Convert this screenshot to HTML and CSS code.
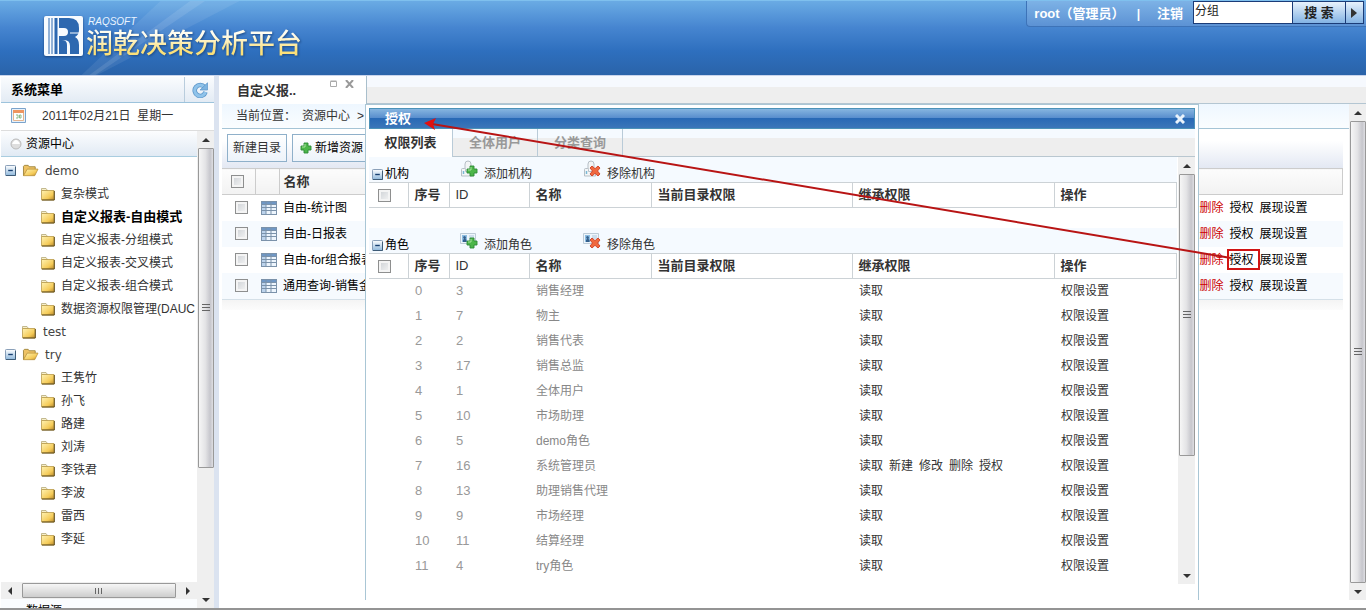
FILE: index.html
```html
<!DOCTYPE html>
<html lang="zh-CN">
<head>
<meta charset="utf-8">
<title>润乾决策分析平台</title>
<link rel="stylesheet" href="styles.css">
</head>
<body>
<svg class="sprite" aria-hidden="true">
  <defs>
    <linearGradient id="gold" x1="0" y1="0" x2="1" y2="1"><stop offset="0" stop-color="#fff3b4"/><stop offset=".65" stop-color="#f5cb58"/><stop offset="1" stop-color="#b8862a"/></linearGradient>
    <linearGradient id="steel" x1="0" y1="0" x2="0" y2="1"><stop offset="0" stop-color="#fff"/><stop offset="1" stop-color="#8fb8dc"/></linearGradient>
    <symbol id="folder" viewBox="0 0 16 16"><path d="M1.500 4.500V2.500h4.500l1.500 2z" fill="#f7efc9" stroke="#b5a878" stroke-width=".8"/><path d="M1.500 4.500h12.500v9.500h-12.500z" fill="url(#gold)" stroke="#b99a4a" stroke-width=".8"/><path d="M14.300 5v9H2" fill="none" stroke="#5f4b18" stroke-width="1"/></symbol>
    <symbol id="folder-open" viewBox="0 0 18 16"><path d="M1.500 13.500V3.500l1-1h4l1 1.500h6.500v3" fill="#eec264" stroke="#a08840"/><path d="M1.500 13.500l4-7H17l-3.500 7z" fill="url(#gold)" stroke="#b58d35" stroke-width=".8"/></symbol>
    <symbol id="minus" viewBox="0 0 12 12"><rect x=".5" y=".5" width="11" height="11" rx="1" fill="url(#steel)" stroke="#7892ae"/><path d="M11.500 2v9.500H1" fill="none" stroke="#35536f"/><path d="M3.500 6h5" stroke="#173f70" stroke-width="1.500"/></symbol>
    <symbol id="grid" viewBox="0 0 16 14"><path d="M0 0h16v14H0z" fill="#7b92aa"/><path d="M1 1h3.500v2H1zM5.500 1h4v2h-4zM10.500 1H15v2h-4.500z" fill="#6f97c5"/><path d="M1 4h3.500v2H1zM1 7h3.500v2H1zM1 10h3.500v3H1z" fill="#bcd3ec"/><path d="M5.500 4h4v2h-4zM10.500 4H15v2h-4.500zM5.500 7h4v2h-4zM10.500 7H15v2h-4.500zM5.500 10h4v3h-4zM10.500 10H15v3h-4.500z" fill="#edf5fd"/></symbol>
    <symbol id="plus" viewBox="0 0 12 12"><path d="M4 1h4v3h3v4H8v3H4V8H1V4h3z" fill="#4cb649" stroke="#2d8a36" stroke-width=".9" stroke-linejoin="round"/><path d="M5 2v3H2" stroke="#a5e39a" fill="none"/></symbol>
    <symbol id="cross" viewBox="0 0 12 12"><path d="M3 1l3 2.700L9 1l2 2-2.500 3L11 9l-2 2-3-2.700L3 11 1 9l2.500-3L1 3z" fill="#f0693f" stroke="#cf3d22" stroke-width=".9" stroke-linejoin="round"/></symbol>
    <symbol id="org" viewBox="0 0 14 18"><path d="M5 9V4q0-3 3-3t3 3v5M1.500 16V9.500q0-1 1-1h2q1 0 1 1v2h7V16z" fill="#f3f5f6" stroke="#b6bfc6"/><path d="M3.500 11v3" stroke="#79b8d6" stroke-width="1.500"/></symbol>
    <symbol id="card" viewBox="0 0 16 12"><path d="M.5 .5h15v10H.5z" fill="#eef5fb" stroke="#bdcbd7"/><path d="M2 2h5v7H2z" fill="#8cbde2"/><path d="M3 9V7l1-1-1-2 1.500-1L6 4 5.500 6l1 1v2z" fill="#345f8b"/><path d="M9 3h5M9 5h5" stroke="#acc7dd"/></symbol>
  </defs>
</svg>

<header class="top">
  <svg class="rays" viewBox="0 0 400 75" aria-hidden="true"><path d="M80 75L160 0H240L96 75z" fill="#fff" opacity=".08"/><path d="M88 75L190 0h15L94 75z" fill="#fff" opacity=".1"/></svg>
  <div class="brand">
    <svg class="logo" viewBox="0 0 39 40" aria-hidden="true"><rect width="39" height="40" rx="2" fill="#f7fbff"/><path d="M5 2v36M8 2v36" stroke="#2d68b0"/><path d="M12 2v36" stroke="#2d68b0" stroke-width="3"/><path d="M15 2h10q10 0 10 10v2q0 5-4 7 4 2 4 8v9h-9v-8q0-6-6-6h-5v-4h5q4 0 4-4t-4-4h-5z" fill="#2d68b0"/><path d="M15 24h3q5 0 5 5v9h-8z" fill="#2d68b0"/><path d="M26 17h10" stroke="#f7fbff"/></svg>
    <div class="brand-text"><span class="brand-en">RAQSOFT</span><h1 class="brand-cn">润乾决策分析平台</h1></div>
  </div>
  <div class="user">
    <span class="who">root（管理员）</span><span class="bar">|</span><a class="logout" href="#">注销</a>
    <form class="search">
      <input class="search-box" type="text" value="分组" aria-label="搜索内容">
      <button class="search-btn" type="button">搜 索</button>
      <button class="search-more" type="button" aria-label="更多"><svg width="7" height="10" viewBox="0 0 7 10"><path d="M0 0l6 5-6 5z" fill="#333"/></svg></button>
    </form>
  </div>
</header>

<div class="workspace">
  <aside class="side">
    <div class="side-head">
      <h2 class="side-title">系统菜单</h2>
      <button class="refresh" type="button" aria-label="刷新"><svg width="16" height="16" viewBox="0 0 16 16"><path d="M12.500 5A5.500 5.500 0 1 0 13.500 10" fill="none" stroke="#5b95c8" stroke-width="4.500"/><path d="M12.500 5A5.500 5.500 0 1 0 13.500 10" fill="none" stroke="#8fc3ea" stroke-width="3"/><path d="M8 8h7.500V.8z" fill="#7db4e0" stroke="#5b95c8" stroke-width=".7"/></svg></button>
    </div>
    <div class="date"><svg width="15" height="15" viewBox="0 0 15 15" aria-hidden="true"><path d="M.5 .5h14v14H.5z" fill="#e7f1fa" stroke="#7ba3cb"/><path d="M2.500 2.500h10v10h-10z" fill="#fff" stroke="#e5b48f"/><path d="M2 2h11v3H2z" fill="#ee9560"/><path d="M5 7h2v3H5m5-3H8.500v3H10z" fill="none" stroke="#8dbb8a"/></svg><span>2011年02月21日&nbsp; 星期一</span></div>
    <div class="side-body">
      <div class="side-main">
        <h3 class="acc"><svg width="12" height="12" viewBox="0 0 12 12" aria-hidden="true"><circle cx="6" cy="6" r="5" fill="#dedede" stroke="#bbb"/><path d="M2 6q4-8 8 0z" fill="#fff"/></svg>资源中心</h3>
        <ul class="tree">
          <li class="node root"><svg class="tg"><use href="#minus"/></svg><svg class="fo"><use href="#folder-open"/></svg><a href="#">demo</a></li>
          <li class="node leaf"><svg class="fc"><use href="#folder"/></svg><a href="#">复杂模式</a></li>
          <li class="node leaf current"><svg class="fc"><use href="#folder"/></svg><a href="#">自定义报表-自由模式</a></li>
          <li class="node leaf"><svg class="fc"><use href="#folder"/></svg><a href="#">自定义报表-分组模式</a></li>
          <li class="node leaf"><svg class="fc"><use href="#folder"/></svg><a href="#">自定义报表-交叉模式</a></li>
          <li class="node leaf"><svg class="fc"><use href="#folder"/></svg><a href="#">自定义报表-组合模式</a></li>
          <li class="node leaf"><svg class="fc"><use href="#folder"/></svg><a href="#">数据资源权限管理(DAUC</a></li>
          <li class="node root solo"><svg class="fc"><use href="#folder"/></svg><a href="#">test</a></li>
          <li class="node root"><svg class="tg"><use href="#minus"/></svg><svg class="fo"><use href="#folder-open"/></svg><a href="#">try</a></li>
          <li class="node leaf"><svg class="fc"><use href="#folder"/></svg><a href="#">王隽竹</a></li>
          <li class="node leaf"><svg class="fc"><use href="#folder"/></svg><a href="#">孙飞</a></li>
          <li class="node leaf"><svg class="fc"><use href="#folder"/></svg><a href="#">路建</a></li>
          <li class="node leaf"><svg class="fc"><use href="#folder"/></svg><a href="#">刘涛</a></li>
          <li class="node leaf"><svg class="fc"><use href="#folder"/></svg><a href="#">李铁君</a></li>
          <li class="node leaf"><svg class="fc"><use href="#folder"/></svg><a href="#">李波</a></li>
          <li class="node leaf"><svg class="fc"><use href="#folder"/></svg><a href="#">雷西</a></li>
          <li class="node leaf"><svg class="fc"><use href="#folder"/></svg><a href="#">李延</a></li>
        </ul>
        <div class="hbar" aria-hidden="true"><i class="arr left"></i><i class="hthumb"><i class="grip-h"></i></i><i class="arr right"></i></div>
        <h3 class="acc next">数据源</h3>
      </div>
      <div class="vbar" aria-hidden="true"><i class="arr up"></i><i class="vthumb side-thumb"><i class="grip-v"></i></i><i class="arr down"></i></div>
    </div>
  </aside>

  <main class="content">
    <div class="tabs">
      <div class="tab"><span class="tab-name">自定义报..</span><span class="tab-tools"><button class="tool" type="button" aria-label="最大化"><svg width="8" height="7" viewBox="0 0 8 7"><path d="M.5 1.500h6v5h-6zM.5 1h6" fill="none" stroke="#aaa"/></svg></button><button class="tool" type="button" aria-label="关闭"><svg width="9" height="8" viewBox="0 0 9 8"><path d="M1 0l7 8M8 0L1 8" stroke="#999" stroke-width="2"/></svg></button></span></div>
    </div>
    <div class="pane">
      <div class="page">
        <nav class="crumb"><span>当前位置：</span><a href="#">资源中心</a><span>&gt;</span></nav>
        <div class="sheet">
          <div class="toolbar"><button class="btn plain" type="button">新建目录</button><button class="btn" type="button"><svg width="12" height="12"><use href="#plus"/></svg>新增资源</button></div>
          <table class="list">
            <colgroup><col class="l-check"><col class="l-icon"><col><col class="l-act"></colgroup>
            <thead><tr><th><input type="checkbox" aria-label="全选资源"></th><th></th><th class="l-name">名称</th><th></th></tr></thead>
            <tbody>
              <tr><td><input type="checkbox" aria-label="选择自由-统计图"></td><td><svg class="gi"><use href="#grid"/></svg></td><td>自由-统计图</td><td class="acts"><a class="del" href="#">删除</a><a href="#">授权</a><a href="#">展现设置</a></td></tr>
              <tr><td><input type="checkbox" aria-label="选择自由-日报表"></td><td><svg class="gi"><use href="#grid"/></svg></td><td>自由-日报表</td><td class="acts"><a class="del" href="#">删除</a><a href="#">授权</a><a href="#">展现设置</a></td></tr>
              <tr><td><input type="checkbox" aria-label="选择自由-for组合报表"></td><td><svg class="gi"><use href="#grid"/></svg></td><td>自由-for组合报表</td><td class="acts"><a class="del" href="#">删除</a><a href="#">授权</a><a href="#">展现设置</a></td></tr>
              <tr><td><input type="checkbox" aria-label="选择通用查询-销售金额"></td><td><svg class="gi"><use href="#grid"/></svg></td><td>通用查询-销售金</td><td class="acts"><a class="del" href="#">删除</a><a href="#">授权</a><a href="#">展现设置</a></td></tr>
            </tbody>
          </table>
          <div class="list-foot"></div>
        </div>
      </div>
      <div class="vbar" aria-hidden="true"><i class="arr up"></i><i class="vthumb full"><i class="grip-v"></i></i><i class="arr down"></i></div>
    </div>
  </main>
</div>

<section class="dialog" role="dialog" aria-label="授权">
  <div class="dlg-head"><h2 class="dlg-title">授权</h2><button class="dlg-close" type="button" aria-label="关闭对话框"><svg width="10" height="10" viewBox="0 0 10 10"><path d="M1 1l8 8M9 1L1 9" stroke="#e9f2fb" stroke-width="3"/></svg></button></div>
  <div class="dlg-tabs"><button class="dtab on" type="button">权限列表</button><button class="dtab" type="button">全体用户</button><button class="dtab" type="button">分类查询</button></div>
  <div class="dlg-body">
    <div class="dlg-main">
      <div class="group"><span class="group-name"><svg class="tg"><use href="#minus"/></svg>机构</span><a class="cmd" href="#"><svg class="ci" viewBox="0 0 18 18"><use href="#org" width="14" height="18"/><use href="#plus" x="6" y="5" width="12" height="12"/></svg>添加机构</a><a class="cmd" href="#"><svg class="ci" viewBox="0 0 18 18"><use href="#org" width="14" height="18"/><use href="#cross" x="6" y="5" width="12" height="12"/></svg>移除机构</a></div>
      <table class="perm empty">
        <colgroup><col class="p-check"><col class="p-no"><col class="p-id"><col class="p-name"><col class="p-cur"><col class="p-inh"><col></colgroup>
        <thead><tr><th><input type="checkbox" aria-label="全选机构"></th><th>序号</th><th class="latin">ID</th><th>名称</th><th>当前目录权限</th><th>继承权限</th><th>操作</th></tr></thead>
      </table>
      <div class="group"><span class="group-name"><svg class="tg"><use href="#minus"/></svg>角色</span><a class="cmd" href="#"><svg class="ci" viewBox="0 0 18 18"><use href="#card" y="2" width="16" height="12"/><use href="#plus" x="6" y="6" width="12" height="12"/></svg>添加角色</a><a class="cmd" href="#"><svg class="ci" viewBox="0 0 18 18"><use href="#card" y="2" width="16" height="12"/><use href="#cross" x="6" y="6" width="12" height="12"/></svg>移除角色</a></div>
      <table class="perm">
        <colgroup><col class="p-check"><col class="p-no"><col class="p-id"><col class="p-name"><col class="p-cur"><col class="p-inh"><col></colgroup>
        <thead><tr><th><input type="checkbox" aria-label="全选角色"></th><th>序号</th><th class="latin">ID</th><th>名称</th><th>当前目录权限</th><th>继承权限</th><th>操作</th></tr></thead>
        <tbody>
          <tr><td></td><td>0</td><td>3</td><td>销售经理</td><td></td><td>读取</td><td><a href="#">权限设置</a></td></tr>
          <tr><td></td><td>1</td><td>7</td><td>物主</td><td></td><td>读取</td><td><a href="#">权限设置</a></td></tr>
          <tr><td></td><td>2</td><td>2</td><td>销售代表</td><td></td><td>读取</td><td><a href="#">权限设置</a></td></tr>
          <tr><td></td><td>3</td><td>17</td><td>销售总监</td><td></td><td>读取</td><td><a href="#">权限设置</a></td></tr>
          <tr><td></td><td>4</td><td>1</td><td>全体用户</td><td></td><td>读取</td><td><a href="#">权限设置</a></td></tr>
          <tr><td></td><td>5</td><td>10</td><td>市场助理</td><td></td><td>读取</td><td><a href="#">权限设置</a></td></tr>
          <tr><td></td><td>6</td><td>5</td><td>demo角色</td><td></td><td>读取</td><td><a href="#">权限设置</a></td></tr>
          <tr><td></td><td>7</td><td>16</td><td>系统管理员</td><td></td><td class="multi"><span>读取</span><span>新建</span><span>修改</span><span>删除</span><span>授权</span></td><td><a href="#">权限设置</a></td></tr>
          <tr><td></td><td>8</td><td>13</td><td>助理销售代理</td><td></td><td>读取</td><td><a href="#">权限设置</a></td></tr>
          <tr><td></td><td>9</td><td>9</td><td>市场经理</td><td></td><td>读取</td><td><a href="#">权限设置</a></td></tr>
          <tr><td></td><td>10</td><td>11</td><td>结算经理</td><td></td><td>读取</td><td><a href="#">权限设置</a></td></tr>
          <tr><td></td><td>11</td><td>4</td><td>try角色</td><td></td><td>读取</td><td><a href="#">权限设置</a></td></tr>
        </tbody>
      </table>
    </div>
    <div class="vbar" aria-hidden="true"><i class="arr up"></i><i class="vthumb dlg-thumb"><i class="grip-v"></i></i><i class="arr down"></i></div>
  </div>
</section>

<svg class="callout" viewBox="0 0 840 160" aria-hidden="true"><path d="M811 141L12 7" stroke="#b81414" stroke-width="2"/><path d="M4 6l12-5-3 6 2 6z" fill="#e01010"/><path d="M808 133h31v19h-31z" fill="none" stroke="#d01414" stroke-width="2"/></svg>
</body>
</html>
```
FILE: styles.css
```css
* { box-sizing: border-box; }
body {
  margin: 0;
  height: 100vh;
  display: flex;
  flex-direction: column;
  overflow: hidden;
  position: relative;
  background: #fff;
  color: #333;
  font: 12px/16px "Liberation Sans", "Noto Sans CJK SC", sans-serif;
  border-bottom: 2px solid #949494;
}
a { color: inherit; text-decoration: none; }
h1, h2, h3, ul { margin: 0; padding: 0; }
ul { list-style: none; }
button { font: inherit; color: inherit; padding: 0; border: 0; background: none; }
svg { flex: none; display: block; }
table { border-collapse: collapse; table-layout: fixed; width: 100%; }
th, td { padding: 0; text-align: left; white-space: nowrap; }
.sprite { position: absolute; width: 0; height: 0; }

input[type="checkbox"] {
  appearance: none;
  display: block;
  width: 13px;
  height: 13px;
  margin: 0;
  border: 1px solid #8e8f8f;
  background: linear-gradient(135deg, #ccd0d4, #f6f6f6);
  box-shadow: inset 0 0 0 2px #f4f4f4;
}

/* Header */
.top {
  flex: none;
  height: 76px;
  display: flex;
  justify-content: space-between;
  align-items: flex-start;
  position: relative;
  background: linear-gradient(#6aabe4, #4685d0 36%, #2e6fbe 68%, #2a63a9);
  border-top: 1px solid #7fc0ee;
  border-bottom: 1px solid #c8d4ec;
}
.rays { position: absolute; left: 0; top: 0; width: 400px; height: 74px; }
.brand { display: flex; gap: 3px; padding: 15px 0 0 44px; position: relative; }
.logo { width: 39px; height: 40px; filter: drop-shadow(0 1px 1px #1b4580); }
.brand-text { display: flex; flex-direction: column; }
.brand-en { font: italic 10px/12px "Liberation Sans", sans-serif; color: #eaf4ff; padding-left: 2px; }
.brand-cn {
  font: 500 27px/32px "Liberation Sans", "Noto Sans CJK SC", sans-serif;
  color: #fbe793;
  background: linear-gradient(#fffdf0 20%, #fbe07a 70%);
  -webkit-background-clip: text;
  background-clip: text;
  -webkit-text-fill-color: transparent;
  filter: drop-shadow(1px 1px 1px #1d4a86);
}
.user {
  display: flex;
  align-items: flex-start;
  height: 26px;
  padding: 0 2px 0 7px;
  color: #fff;
  font-weight: bold;
  line-height: 26px;
  background: linear-gradient(#7db2e6, #5c92d4);
  border: 1px solid #3d73b8;
  border-width: 0 0 1px 1px;
  border-radius: 0 0 0 4px;
}
.who { font-size: 13px; }
.bar { padding: 0 17px 0 12px; }
.logout { font-size: 13px; padding-right: 10px; }
.search { display: flex; height: 23px; color: #222; }
.search-box {
  width: 100px;
  border: 1px solid #1b3c78;
  padding: 0 1px 6px;
  font: 12px/16px "Noto Sans CJK SC", sans-serif;
  color: #222;
  background: #fff;
}
.search-btn, .search-more {
  width: 53px;
  border: 1px solid #1b3c78;
  border-left: 0;
  background: linear-gradient(#e8f2fc, #83b3e4);
  font-size: 13px;
  font-weight: bold;
  line-height: 20px;
}
.search-more { width: 18px; display: flex; align-items: center; justify-content: center; }

/* Sidebar */
.workspace { flex: 1; min-height: 0; display: flex; }
.side { flex: none; width: 219px; display: flex; flex-direction: column; padding: 1px 0 0 1px; border-right: 5px solid #dbe3f0; }
.side-head {
  flex: none;
  height: 26px;
  display: flex;
  justify-content: space-between;
  align-items: center;
  padding-left: 10px;
  background: linear-gradient(#fafcfe, #e3ebf4);
  border-bottom: 1px solid #9dc3dc;
}
.side-title { font-size: 13px; color: #000; }
.refresh { height: 25px; padding: 0 6px 0 7px; border-left: 1px solid #b9cddd; }
.date { flex: none; height: 28px; display: flex; align-items: center; gap: 16px; padding: 0 0 2px 10px; border-bottom: 1px solid #ddd; }
.side-body { flex: 1; min-height: 0; display: flex; }
.side-main { flex: 1; min-width: 0; display: flex; flex-direction: column; overflow: hidden; }
.acc {
  flex: none;
  height: 26px;
  display: flex;
  align-items: center;
  gap: 4px;
  padding-left: 9px;
  font-size: 12px;
  font-weight: normal;
  color: #000;
  background: linear-gradient(#fcfdfe, #e1eaf4);
  border-bottom: 1px solid #a9cde0;
}
.next { height: 9px; overflow: hidden; align-items: flex-start; padding: 4px 0 0 25px; border: 0; background: #fafcfe; }
.tree { flex: 1; min-height: 0; overflow: hidden; padding-top: 2px; }
.node { height: 23px; display: flex; align-items: center; white-space: nowrap; font-family: "DejaVu Sans", "Noto Sans CJK SC", sans-serif; }
.root { padding-left: 4px; gap: 6px; color: #444; }
.solo { padding-left: 20px; }
.leaf { padding-left: 39px; gap: 5px; font-family: "Liberation Sans", "Noto Sans CJK SC", sans-serif; }
.current { color: #000; font-size: 13px; font-weight: bold; }
.tg { width: 11px; height: 11px; }
.fo { width: 17px; height: 15px; }
.fc { width: 16px; height: 16px; }

/* Scroll bars */
.vbar { flex: none; width: 17px; display: flex; flex-direction: column; align-items: center; background: #efefef; }
.hbar { flex: none; height: 17px; display: flex; align-items: center; background: #efefef; }
.arr { flex: none; width: 17px; height: 17px; display: flex; align-items: center; justify-content: center; }
.arr::before { content: ""; border: 4px solid transparent; }
.up::before { border-top: 0; border-bottom-color: #333; }
.down::before { border-bottom: 0; border-top-color: #333; }
.left::before { border-left: 0; border-right-color: #333; }
.right::before { border-right: 0; border-left-color: #333; }
.vthumb, .hthumb { display: flex; align-items: center; justify-content: center; border: 1px solid #999; border-radius: 1px; }
.vthumb { width: 16px; margin-bottom: auto; background: linear-gradient(90deg, #f6f6f6, #e4e4e6 45%, #c6c6cc 80%, #dedee2); }
.hthumb { height: 15px; flex: none; width: 79%; margin: 0 auto; background: linear-gradient(#f6f6f6, #e4e4e4 45%, #cdcdcd); }
.grip-v { width: 8px; height: 8px; background: repeating-linear-gradient(#666 0 1px, transparent 1px 3px); }
.grip-h { width: 8px; height: 6px; background: repeating-linear-gradient(90deg, #666 0 1px, transparent 1px 3px); }
.side-thumb { height: 67%; }
.full { flex: 1; margin: 0; }
.dlg-thumb { height: 66%; }

/* Content */
.content { flex: 1; min-width: 0; display: flex; flex-direction: column; }
.tabs { flex: none; height: 28px; display: flex; background: linear-gradient(#f6f9fe 11px, #eee 11px); border-bottom: 1px solid #b4c6d2; }
.tab { width: 148px; height: 28px; display: flex; justify-content: space-between; padding: 0 12px 0 18px; background: #fff; border-right: 1px solid #a9bfcc; }
.tab-name { font-size: 13px; font-weight: bold; line-height: 29px; }
.tab-tools { display: flex; gap: 7px; align-items: flex-start; padding-top: 4px; }
.pane { flex: 1; min-height: 0; display: flex; padding-bottom: 8px; }
.page { flex: 1; min-width: 0; padding-left: 3px; }
.crumb { height: 25px; display: flex; align-items: center; padding-left: 14px; background: linear-gradient(#eef7ff, #fafdff); border-bottom: 1px solid #a5c4d6; }
.crumb a { padding: 0 7px 0 6px; }
.sheet { margin-right: 6px; }
.toolbar { height: 39px; display: flex; align-items: flex-start; gap: 5px; padding: 5px; background: linear-gradient(#fff 30%, #e3e8f3); }
.btn { height: 28px; display: flex; align-items: center; gap: 3px; padding: 0 7px; color: #000; background: linear-gradient(#fff, #edf3fa); border: 1px solid #8fb0ca; }
.plain { padding: 0 5px; color: #333; }
.l-check { width: 33px; }
.l-icon { width: 24px; }
.l-act { width: 143px; }
.list { color: #000; }
.list th { height: 26px; background: linear-gradient(#fcfcfc, #f2f2f2); border: 1px solid #ccc; border-width: 1px 0; color: #333; font-size: 13px; }
.list th:first-child { padding-left: 9px; }
.list th:nth-child(2) { border-width: 1px; }
.list th:last-child { border-right-width: 1px; }
.list td { height: 26px; }
.list td:first-child { padding-left: 13px; }
.list td:nth-child(2) { padding-left: 6px; }
.list td:nth-child(3), .list .l-name { padding-left: 4px; }
.list tr:nth-child(even) td { background: #f6fafe; }
.gi { width: 16px; height: 14px; }
.acts a { margin-right: 6px; }
.del { color: #c00; }
.list-foot { height: 11px; border-top: 1px solid #d5e0e8; background: linear-gradient(#f4f4f4, #fcfcfc); }

/* Permission dialog */
.dialog {
  position: absolute;
  left: 365px;
  right: 167px;
  top: 104px;
  bottom: 8px;
  display: flex;
  flex-direction: column;
  padding: 3px 3px 16px;
  background: #fff;
  border: 1px solid #a9c6d5;
  border-bottom: 0;
}
.dlg-head { flex: none; height: 21px; display: flex; align-items: center; justify-content: space-between; padding: 0 9px 0 15px; color: #fff; background: linear-gradient(#86b5e0, #5a8fce 45%, #2768b5 46%, #3b76b9); border: 1px solid #4c92b8; }
.dlg-title { font-size: 13px; }
.dlg-tabs { flex: none; height: 28px; display: flex; background: linear-gradient(#f5faff 9px, #eee 9px); border-bottom: 1px solid #b9c7d0; }
.dtab { width: 85px; height: 27px; font-size: 13px; font-weight: bold; color: #999; border-right: 1px solid #b9cbd8; }
.dtab.on { width: 84px; height: 28px; background: #fff; color: #333; }
.dlg-body { flex: 1; min-height: 0; display: flex; }
.dlg-main { flex: 1; min-width: 0; margin-right: 1px; overflow: hidden; }
.group { height: 25px; display: flex; align-items: flex-end; padding-left: 3px; color: #000; background: #f5faff; }
.group-name { width: 88px; display: flex; align-items: center; gap: 2px; }
.cmd { width: 123px; display: flex; align-items: flex-end; gap: 6px; color: #333; }
.ci { width: 18px; height: 18px; margin-bottom: 4px; }
.perm { color: #333; }
.empty { margin-bottom: 20px; }
.p-check { width: 39px; }
.p-no { width: 41px; }
.p-id { width: 80px; }
.p-name { width: 122px; }
.p-cur { width: 201px; }
.p-inh { width: 202px; }
.perm th { height: 25px; padding-left: 6px; border: 1px solid #ccd2d6; font-size: 13px; }
.perm th:first-child { padding-left: 9px; border-left: 0; }
.perm .latin { font-weight: 500; }
.perm td { height: 25px; padding-left: 7px; }
.perm td:nth-child(2), .perm td:nth-child(3) { font-size: 13px; color: #999; }
.perm td:nth-child(4) { color: #888; }
.multi span { margin-right: 6px; }

/* Pointer from the row action to the dialog title */
.callout { position: absolute; left: 420px; top: 117px; width: 840px; height: 160px; pointer-events: none; }
```
